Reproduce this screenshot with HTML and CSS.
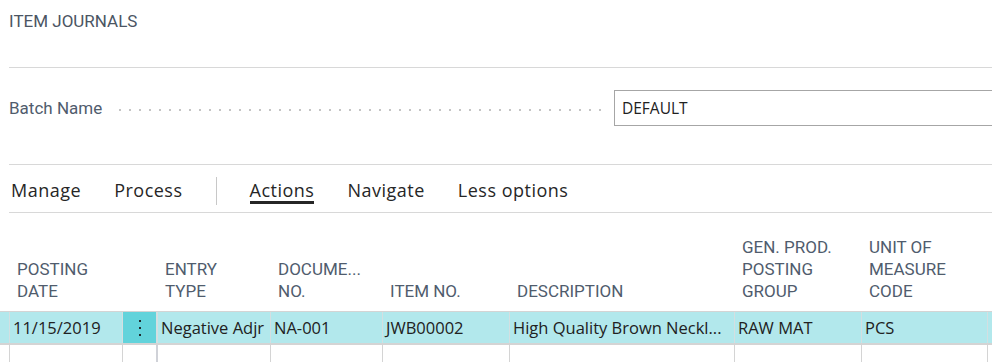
FILE: index.html
```html
<!DOCTYPE html>
<html lang="en">
<head>
    <meta charset="UTF-8">
    <title>Item Journals</title>
    <link rel="stylesheet" href="styles.css">
</head>
<body>
    <div class="page">
        <h1 class="title">ITEM JOURNALS</h1>

        <div class="field">
            <label class="field-label" for="batch">Batch Name</label>
            <span class="leader"></span>
            <div class="field-input" id="batch">DEFAULT</div>
        </div>

        <nav class="actions">
            <a class="action">Manage</a>
            <a class="action">Process</a>
            <span class="action-sep"></span>
            <a class="action active">Actions</a>
            <a class="action">Navigate</a>
            <a class="action">Less options</a>
        </nav>
    </div>

    <div class="grid">
        <div class="grid-row grid-head">
            <div class="cell"></div>
            <div class="cell">Posting<br>Date</div>
            <div class="cell"></div>
            <div class="cell">Entry<br>Type</div>
            <div class="cell">Docume...<br>No.</div>
            <div class="cell">Item No.</div>
            <div class="cell">Description</div>
            <div class="cell">Gen. Prod.<br>Posting<br>Group</div>
            <div class="cell">Unit of<br>Measure<br>Code</div>
            <div class="cell"></div>
        </div>
        <div class="grid-row grid-line selected">
            <div class="cell lead"></div>
            <div class="cell">11/15/2019</div>
            <div class="cell menu"><span class="dots"><i></i><i></i><i></i></span></div>
            <div class="cell wide-border">Negative Adjr</div>
            <div class="cell">NA-001</div>
            <div class="cell">JWB00002</div>
            <div class="cell">High Quality Brown Neckl...</div>
            <div class="cell">RAW MAT</div>
            <div class="cell">PCS</div>
            <div class="cell"></div>
        </div>
        <div class="grid-row grid-line">
            <div class="cell lead"></div>
            <div class="cell"></div>
            <div class="cell"></div>
            <div class="cell wide-border"></div>
            <div class="cell"></div>
            <div class="cell"></div>
            <div class="cell"></div>
            <div class="cell"></div>
            <div class="cell"></div>
            <div class="cell"></div>
        </div>
    </div>
</body>
</html>
```

FILE: styles.css
```css
body {
    margin: 0;
    background-color: #ffffff;
    color: #212121;
    font-family: "Open Sans", Arial, sans-serif;
    overflow: hidden;
}

.page {
    padding-left: 9px;
}

.title {
    margin: 0;
    padding: 11px 0 0 0;
    height: 56px;
    font-family: Roboto, Arial, sans-serif;
    font-size: 17px;
    line-height: 20px;
    font-weight: 400;
    color: #4b5563;
    border-bottom: 1px solid #d8d8d8;
}

.field {
    display: flex;
    align-items: center;
    box-sizing: border-box;
    height: 97px;
    padding: 0 0 16px 0;
    border-bottom: 1px solid #d8d8d8;
    margin-right: -31px;
}

.field-label {
    font-family: Roboto, Arial, sans-serif;
    font-size: 17px;
    color: #505c6d;
}

.leader {
    flex: 1;
    height: 2px;
    margin: 3px 8px 0 17px;
    background-image: repeating-linear-gradient(to right, #c4c4c4 0, #c4c4c4 2px, transparent 2px, transparent 10px);
}

.field-input {
    width: 400px;
    height: 34px;
    line-height: 34px;
    border: 1px solid #a6a6a6;
    padding-left: 7px;
    font-size: 15.5px;
    color: #212121;
}

.actions {
    display: flex;
    align-items: center;
    gap: 33px;
    box-sizing: border-box;
    height: 48px;
    padding: 3px 0 0 2px;
    border-bottom: 1px solid #d8d8d8;
    font-size: 18px;
    letter-spacing: 0.5px;
}

.action {
    position: relative;
    color: #262626;
}

.action.active::after {
    content: "";
    position: absolute;
    left: 0;
    right: 0;
    bottom: -2px;
    height: 3px;
    background-color: #262626;
}

.action-sep {
    width: 1px;
    height: 28px;
    margin-top: 2px;
    background-color: #c8c8c8;
}

.grid-row {
    display: grid;
    grid-template-columns: 9px 113px 34px 114px 112px 127px 225px 127px 126px 1fr;
}

.grid-head {
    height: 98px;
    align-items: end;
    font-family: Roboto, Arial, sans-serif;
    font-size: 17px;
    line-height: 22px;
    text-transform: uppercase;
    color: #505c6d;
}

.grid-head .cell {
    padding: 0 0 9px 7px;
    border-left: 1px solid transparent;
    white-space: nowrap;
}

.grid-head .cell:nth-child(4) {
    border-left-width: 2px;
}

.grid-line {
    border-top: 1px solid #d4d4d4;
    height: 31px;
    font-size: 16.5px;
}

.grid-line .cell {
    border-left: 1px solid #d4d4d4;
    padding-left: 3px;
    line-height: 31px;
    white-space: nowrap;
    overflow: hidden;
}

.grid-line .lead {
    border-left: none;
}

.grid-line .wide-border {
    border-left: 2px solid #d0d2d8;
}

.selected {
    background-color: #b2e8ec;
    border-bottom: 1px solid #d4d4d4;
}

.selected .cell {
    border-left-color: #d4dfe1;
}

.menu {
    background-color: #62d3db;
    display: flex;
    justify-content: center;
    align-items: center;
}

.dots {
    display: flex;
    flex-direction: column;
    gap: 5px;
    margin-left: -3px;
}

.dots i {
    display: block;
    width: 2px;
    height: 2px;
    background-color: #1e2b2f;
}
```
